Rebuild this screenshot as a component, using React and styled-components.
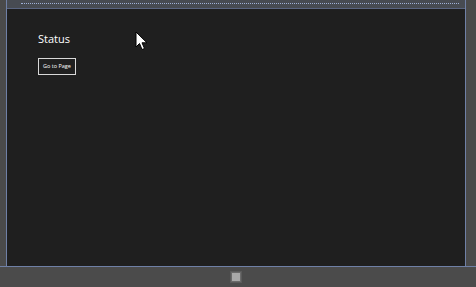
import React from 'react';
import styled, { createGlobalStyle } from 'styled-components';

const Global = createGlobalStyle`
  html, body { margin: 0; padding: 0; background: #4a4a4a; }
  body { font-family: "Open Sans", "Liberation Sans", sans-serif; }
`;

export default function App() {
  return (
    <React.Fragment>
      <Global />
      <Frame>
        <Device>
          <TopBar>
            <Dots />
          </TopBar>
          <Screen>
            <Title>Status</Title>
            <PageButton>Go to Page</PageButton>
            <Cursor width="13" height="20" viewBox="0 0 13 20">
              <path d="M1 1 L1 16 L4.5 12.5 L7 18.5 L9.5 17.5 L7 11.8 L12 11.8 Z" fill="#fff" stroke="#000" strokeWidth="1" />
            </Cursor>
          </Screen>
        </Device>
        <BottomBar>
          <WinButton />
        </BottomBar>
      </Frame>
    </React.Fragment>
  );
}

const Frame = styled.div`
  width: 476px;
  height: 287px;
  display: flex;
  flex-direction: column;
  background: #4a4a4a;
  overflow: hidden;
`;

const Device = styled.div`
  flex: 1;
  display: flex;
  flex-direction: column;
  margin: 0 10px 0 6px;
  border-left: 1px solid #6f80a6;
  border-right: 1px solid #6f80a6;
`;

const TopBar = styled.div`
  height: 9px;
  display: flex;
  align-items: flex-start;
  padding: 3px 6px 0 14px;
  box-sizing: border-box;
  background: #474b52;
  border-bottom: 1px solid #5a6580;
`;

const Dots = styled.div`
  flex: 1;
  height: 1px;
  border-top: 1px dotted #9fb0d8;
`;

const Screen = styled.div`
  flex: 1;
  position: relative;
  background: #1f1f1f;
  padding: 23px 31px;
  color: #fff;
`;

const Title = styled.div`
  font-size: 11px;
  line-height: 14px;
  margin-bottom: 5px;
`;

const PageButton = styled.div`
  display: inline-flex;
  align-items: center;
  height: 15px;
  padding: 0 4px;
  border: 1px solid #d8d8d8;
  font-size: 5.5px;
  color: #fff;
`;

const Cursor = styled.svg`
  position: absolute;
  left: 128px;
  top: 22px;
`;

const BottomBar = styled.div`
  height: 20px;
  display: flex;
  justify-content: center;
  align-items: center;
  background: #4b4b4b;
  border-top: 1px solid #6f80a6;
`;

const WinButton = styled.div`
  width: 8px;
  height: 8px;
  margin-left: -4px;
  background: #a8a8a8;
  border: 1px solid #6a6a6a;
  box-shadow: 0 0 0 1px #5a5a5a;
`;
